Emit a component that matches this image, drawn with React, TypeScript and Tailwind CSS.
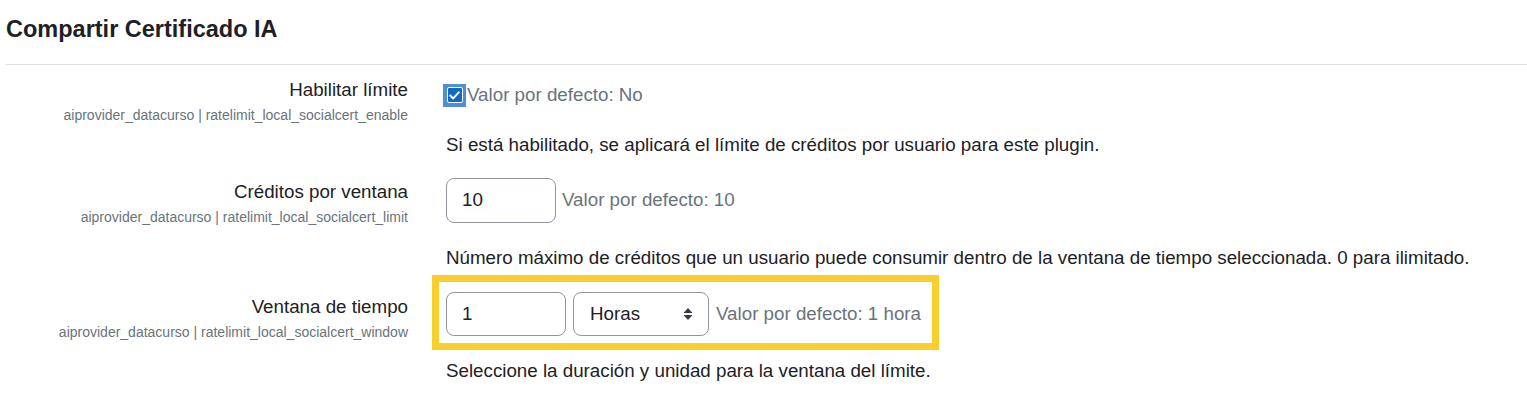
import React from 'react'

const SelectArrows = () => (
  <svg width="10" height="14" viewBox="0 0 10 14" className="shrink-0">
    <path d="M5 1 L9.5 6 H0.5 Z" fill="#343a40" />
    <path d="M5 13 L9.5 8 H0.5 Z" fill="#343a40" />
  </svg>
)

const Label = ({ title, name }: { title: string; name: string }) => (
  <div className="w-[402px] shrink-0 pt-[1px] text-right">
    <div className="text-[18.75px] leading-[25px] text-[#1d2125]">{title}</div>
    <div className="mt-[3px] text-[14px] leading-[20px] text-[#6a737b]">{name}</div>
  </div>
)

export default function App() {
  return (
    <div className="min-h-[411px] bg-white pl-[6px] font-['Liberation_Sans',Arial,sans-serif] text-[#1d2125]">
      <h2 className="pt-[14px] text-[23.5px] font-bold leading-[30px]">Compartir Certificado IA</h2>
      <div className="mt-[20px] h-px bg-[#dee2e6]" />

      {/* Habilitar límite */}
      <div className="mt-[11px] flex">
        <Label title="Habilitar límite" name="aiprovider_datacurso | ratelimit_local_socialcert_enable" />
        <div className="ml-[38px] pt-[7px]">
          <div className="flex h-[24px] items-center">
            <span className="-ml-[3px] flex h-[23px] w-[23px] items-center justify-center bg-[#4f8fd6]">
              <span className="flex h-[16px] w-[16px] items-center justify-center rounded-[2px] border border-white bg-[#0f6cbf]">
                <svg width="11" height="9" viewBox="0 0 11 9">
                  <path d="M1.2 4.6 L4.2 7.4 L9.8 1.4" fill="none" stroke="white" strokeWidth="2" strokeLinecap="round" strokeLinejoin="round" />
                </svg>
              </span>
            </span>
            <span className="ml-[1px] text-[18.75px] text-[#6a737b]">Valor por defecto: No</span>
          </div>
          <p className="mt-[25px] text-[18.75px] leading-[25px]">
            Si está habilitado, se aplicará el límite de créditos por usuario para este plugin.
          </p>
        </div>
      </div>

      {/* Créditos por ventana */}
      <div className="mt-[21px] flex">
        <Label title="Créditos por ventana" name="aiprovider_datacurso | ratelimit_local_socialcert_limit" />
        <div className="ml-[38px]">
          <div className="flex items-center">
            <div className="flex h-[45px] w-[110px] items-center rounded-[8px] border border-[#8f959e] pl-[15px] text-[18.75px]">10</div>
            <span className="ml-[6px] text-[18.75px] text-[#6a737b]">Valor por defecto: 10</span>
          </div>
          <p className="mt-[22px] text-[18.75px] leading-[25px]">
            Número máximo de créditos que un usuario puede consumir dentro de la ventana de tiempo seleccionada. 0 para ilimitado.
          </p>
        </div>
      </div>

      {/* Ventana de tiempo */}
      <div className="mt-[5px] flex">
        <div className="pt-[18px]">
          <Label title="Ventana de tiempo" name="aiprovider_datacurso | ratelimit_local_socialcert_window" />
        </div>
        <div className="ml-[38px]">
          <div className="-ml-[14px] inline-flex items-center border-[7px] border-[#f7d02e] pt-[10px] pb-[7px] pl-[7px] pr-[11px]">
            <div className="flex h-[44px] w-[120px] items-center rounded-[8px] border border-[#8f959e] pl-[15px] text-[18.75px]">1</div>
            <div className="ml-[7px] flex h-[44px] w-[136px] items-center justify-between rounded-[8px] border border-[#8f959e] pl-[16px] pr-[15px] text-[18.75px]">
              <span>Horas</span>
              <SelectArrows />
            </div>
            <span className="ml-[7px] text-[18.75px] text-[#6a737b]">Valor por defecto: 1 hora</span>
          </div>
          <p className="mt-[8px] text-[18.75px] leading-[25px]">
            Seleccione la duración y unidad para la ventana del límite.
          </p>
        </div>
      </div>
    </div>
  )
}
